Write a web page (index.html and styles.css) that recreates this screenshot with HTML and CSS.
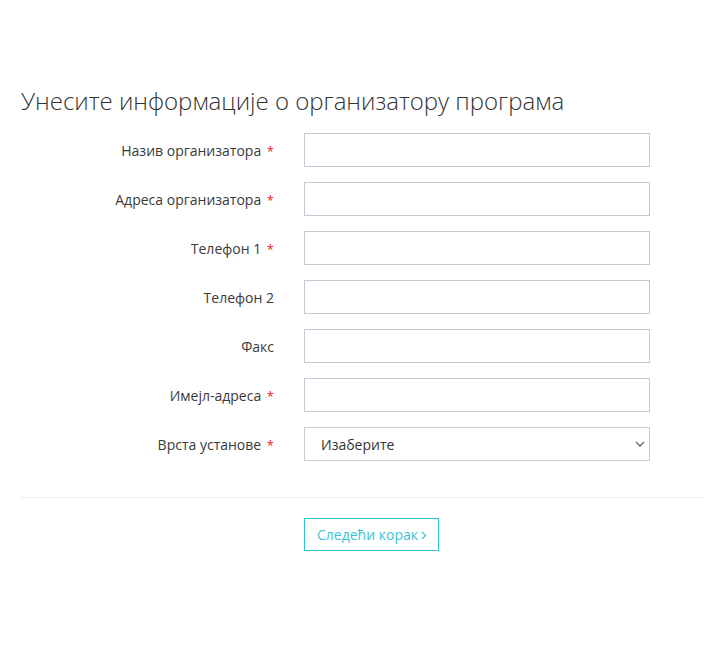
FILE: index.html
```html
<!DOCTYPE html>
<html lang="sr">
<head>
    <meta charset="UTF-8">
    <meta name="viewport" content="width=device-width, initial-scale=1.0">
    <title>Организатор програма</title>
    <link rel="stylesheet" href="styles.css">
</head>
<body>
    <div class="container">
        <h2 class="title">Унесите информације о организатору програма</h2>

        <form class="form">
            <div class="form-row">
                <label for="naziv">Назив организатора <span class="req">*</span></label>
                <input type="text" id="naziv">
            </div>
            <div class="form-row">
                <label for="adresa">Адреса организатора <span class="req">*</span></label>
                <input type="text" id="adresa">
            </div>
            <div class="form-row">
                <label for="tel1">Телефон 1 <span class="req">*</span></label>
                <input type="text" id="tel1">
            </div>
            <div class="form-row">
                <label for="tel2">Телефон 2</label>
                <input type="text" id="tel2">
            </div>
            <div class="form-row">
                <label for="faks">Факс</label>
                <input type="text" id="faks">
            </div>
            <div class="form-row">
                <label for="email">Имејл-адреса <span class="req">*</span></label>
                <input type="text" id="email">
            </div>
            <div class="form-row">
                <label for="vrsta">Врста установе <span class="req">*</span></label>
                <div class="select-wrap">
                    <select id="vrsta">
                        <option>Изаберите</option>
                    </select>
                    <svg class="chevron" width="10" height="6" viewBox="0 0 10 6">
                        <path d="M1 1l4 4 4-4" fill="none" stroke="#666" stroke-width="1.3"/>
                    </svg>
                </div>
            </div>

            <hr class="divider">

            <div class="actions">
                <button type="button" class="btn-next">Следећи корак
                    <svg class="arrow" width="6" height="9" viewBox="0 0 6 9">
                        <path d="M1 1l3.5 3.5L1 8" fill="none" stroke="currentColor" stroke-width="1.2"/>
                    </svg>
                </button>
            </div>
        </form>
    </div>
</body>
</html>
```

FILE: styles.css
```css
body {
    margin: 0;
    font-family: "Open Sans", Arial, sans-serif;
    font-size: 14px;
    color: #3a3a3a;
    background: #fff;
}
.container {
    padding: 0 25px 0 21px;
}
.title {
    font-weight: 300;
    font-size: 24px;
    line-height: 26px;
    color: #333;
    margin: 88px 0 19px 0;
}
.form-row {
    display: grid;
    grid-template-columns: 253px 346px;
    column-gap: 30px;
    align-items: center;
    margin-bottom: 15px;
}
.form-row label {
    text-align: right;
    color: #3a3a3a;
}
.req {
    color: #e8202a;
    margin-left: 2px;
    font-size: 13px;
}
.form-row input,
.form-row select {
    box-sizing: border-box;
    width: 346px;
    height: 34px;
    margin: 0;
    border: 1px solid #c3cad5;
    border-radius: 0;
    background: #fff;
    font-family: inherit;
    font-size: 14px;
    color: #333;
    padding: 0 16px;
}
.select-wrap {
    position: relative;
}
.form-row select {
    border-color: #ccc;
    appearance: none;
    -webkit-appearance: none;
}
.chevron {
    position: absolute;
    right: 5px;
    top: 14px;
    pointer-events: none;
}
.divider {
    border: 0;
    border-top: 1px solid #eee;
    margin: 36px 0 20px 0;
}
.actions {
    padding-left: 283px;
}
.btn-next {
    display: inline-flex;
    align-items: center;
    gap: 3px;
    width: 135px;
    height: 33px;
    padding: 0 0 0 12px;
    border: 1px solid #2cc5d6;
    background: #fff;
    color: #3cc3d6;
    font-family: inherit;
    font-size: 14px;
}
.arrow {
    margin-top: 1px;
}
```
